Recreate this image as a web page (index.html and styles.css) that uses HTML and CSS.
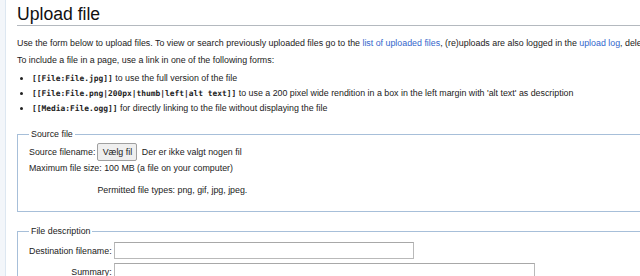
FILE: index.html
```html
<!DOCTYPE html>
<html lang="en">
<head>
    <meta charset="UTF-8">
    <title>Upload file</title>
    <link rel="stylesheet" href="styles.css">
</head>
<body>
    <div class="page">
        <div class="rail"></div>
        <div class="content">
            <h1 class="page-title">Upload file</h1>
            <p class="intro">Use the form below to upload files. To view or search previously uploaded files go to the <a href="#">list of uploaded files</a>, (re)uploads are also logged in the <a href="#">upload log</a>, deletions in the <a href="#">deletion log</a>.</p>
            <p>To include a file in a page, use a link in one of the following forms:</p>
            <ul class="forms">
                <li><code>[[File:File.jpg]]</code> to use the full version of the file</li>
                <li><code>[[File:File.png|200px|thumb|left|alt text]]</code> to use a 200 pixel wide rendition in a box in the left margin with 'alt text' as description</li>
                <li><code>[[Media:File.ogg]]</code> for directly linking to the file without displaying the file</li>
            </ul>

            <form>
                <fieldset class="box">
                    <legend>Source file</legend>
                    <div class="rows source">
                        <label class="label" for="file">Source filename:</label>
                        <div class="field">
                            <button type="button" class="pick">Vælg fil</button>
                            <span class="nofile">Der er ikke valgt nogen fil</span>
                        </div>
                        <div class="full">Maximum file size: 100 MB (a file on your computer)</div>
                        <div class="label"></div>
                        <div class="field permitted">Permitted file types: png, gif, jpg, jpeg.</div>
                    </div>
                </fieldset>

                <fieldset class="box second">
                    <legend>File description</legend>
                    <div class="rows desc">
                        <label class="label right" for="dest">Destination filename:</label>
                        <div class="field"><input type="text" id="dest" class="text dest"></div>
                        <label class="label right" for="summary">Summary:</label>
                        <div class="field"><input type="text" id="summary" class="text summary"></div>
                    </div>
                </fieldset>
            </form>
        </div>
    </div>
</body>
</html>
```

FILE: styles.css
```css
html, body { overflow: hidden; }
body { margin: 0; font-family: "Liberation Sans", Arial, sans-serif; font-size: 8.85px; color: #222; background: #fff; }
.page { display: flex; min-height: 276px; }
.rail { width: 5px; flex-shrink: 0; background: #f3f6fa; border-right: 1px solid #dde7f1; }
.content { width: 1100px; flex-shrink: 0; padding-left: 11px; }
a { color: #3366cc; text-decoration: none; }

.page-title { margin: 0; padding-top: 4px; font-size: 17.6px; font-weight: normal; line-height: 21px; color: #111; border-bottom: 1px solid #b4b9bf; }

p { margin: 3px 0 0; line-height: 14px; }
.intro { margin-top: 10px; }

.forms { margin: 4px 0 0; padding-left: 15px; line-height: 14px; }
.forms code { font-family: "DejaVu Sans Mono", "Liberation Mono", monospace; font-weight: bold; font-size: 7.9px; color: #222; }

.box { margin: 11px 0 0; padding: 2px 12px 14px 11px; border: 1px solid #a7bfd9; }
.box.second { margin-top: 12px; }
.box legend { padding: 0 2px; line-height: 14px; }

.rows { display: grid; grid-template-columns: auto 1fr; align-items: center; line-height: 14px; }
.label { padding-right: 2px; }
.right { text-align: right; }
.full { grid-column: 1 / -1; }
.permitted { margin-top: 8px; }

.pick { font-family: "Liberation Sans", Arial, sans-serif; font-size: 8.85px; color: #222; height: 18px; width: 40px; padding: 0; background: #efefef; border: 1px solid #a0a0a0; border-radius: 2px; }
.nofile { margin-left: 2px; }

.desc { row-gap: 4px; padding-top: 2px; }
.text { height: 17px; box-sizing: border-box; margin: 0; border: 1px solid #b9b9b9; border-top-color: #a8a8a8; background: #fff; display: block; }
.dest { width: 300px; }
.summary { width: 421px; }
```
